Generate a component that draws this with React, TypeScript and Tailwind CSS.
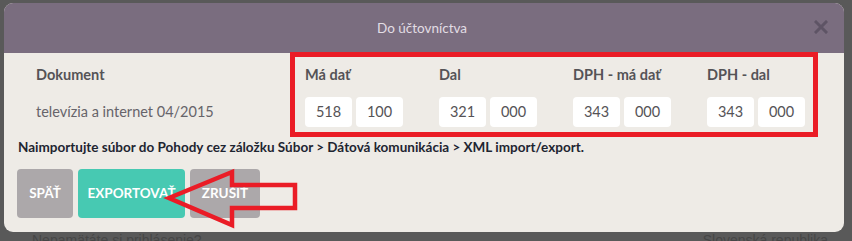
import React from "react";

const groups = [
  { label: "Má dať", a: "518", b: "100" },
  { label: "Dal", a: "321", b: "000" },
  { label: "DPH - má dať", a: "343", b: "000" },
  { label: "DPH - dal", a: "343", b: "000" },
];

export default function App() {
  return (
    <div
      className="relative w-[852px] h-[241px] overflow-hidden bg-[#595959] flex flex-col"
      style={{ fontFamily: "Lato, 'Open Sans', sans-serif" }}
    >
      <div className="pt-[3px] pl-[4px]">
        <div className="w-[840px] h-[229px] rounded-[9px] bg-[#eeebe6] overflow-hidden flex flex-col">
          {/* header */}
          <div className="h-[50px] bg-[#7a6d7f] flex items-center justify-center relative">
            <span className="text-[13.5px] text-[#e2dde4] ml-[-4px]">Do účtovníctva</span>
            <svg
              className="absolute right-[16px] top-[17px]"
              width="14"
              height="14"
              viewBox="0 0 14 14"
            >
              <path d="M2 2 L12 12 M12 2 L2 12" stroke="#5e5465" strokeWidth="3" strokeLinecap="square" />
            </svg>
          </div>
          {/* table */}
          <div className="pl-[32px] pt-[12px] flex">
            <div className="w-[269px] flex flex-col">
              <div className="h-[20px] text-[14.5px] leading-[20px] font-bold text-[#555356]">Dokument</div>
              <div className="mt-[12px] h-[30px] flex items-center text-[14.5px] text-[#66646a]">
                televízia a internet 04/2015
              </div>
            </div>
            <div className="flex gap-[36px]">
              {groups.map((g) => (
                <div key={g.label} className="flex flex-col w-[98px]">
                  <div className="h-[20px] text-[14.5px] leading-[20px] font-bold text-[#555356] whitespace-nowrap">
                    {g.label}
                  </div>
                  <div className="mt-[12px] flex gap-[4px]">
                    <div className="w-[47px] h-[30px] rounded-[4px] bg-white flex items-center justify-center text-[14.5px] text-[#555356]">
                      {g.a}
                    </div>
                    <div className="w-[47px] h-[30px] rounded-[4px] bg-white flex items-center justify-center text-[14.5px] text-[#555356]">
                      {g.b}
                    </div>
                  </div>
                </div>
              ))}
            </div>
          </div>
          <div className="pl-[14px] mt-[11px] h-[18px] text-[13.5px] leading-[18px] font-bold text-[#1e2531] whitespace-nowrap">
            Naimportujte súbor do Pohody cez záložku Súbor &gt; Dátová komunikácia &gt; XML import/export.
          </div>
          <div className="pl-[13px] mt-[13px] flex gap-[5px]">
            <div className="w-[56px] h-[49px] rounded-[4px] bg-[#aca8aa] flex items-center justify-center text-[13.5px] font-bold text-white">
              SPÄŤ
            </div>
            <div className="w-[107px] h-[49px] rounded-[4px] bg-[#47c9b2] flex items-center justify-center text-[13.5px] font-bold text-white">
              EXPORTOVAŤ
            </div>
            <div className="w-[70px] h-[49px] rounded-[4px] bg-[#aca8aa] flex items-center justify-center text-[13.5px] font-bold text-white">
              ZRUŠIŤ
            </div>
          </div>
        </div>
      </div>
      <div
        className="flex h-[20px] text-[14px] text-[#464646]"
        style={{ fontFamily: "'Liberation Sans', Arial, sans-serif" }}
      >
        <span className="ml-[32px] leading-[16px]">Nepamätáte si prihlásenie?</span>
        <span className="ml-auto mr-[24px] leading-[16px]">Slovenská republika</span>
      </div>
      {/* annotations */}
      <svg className="absolute left-0 top-0 pointer-events-none" width="852" height="241" viewBox="0 0 852 241">
        <rect x="292.5" y="54.5" width="523" height="80" fill="none" stroke="#ea1c26" strokeWidth="5" />
        <path
          d="M295 185 L232 185 L232 172 L169 198 L232 225 L232 208 L295 208 Z"
          fill="none"
          stroke="#ea1c26"
          strokeWidth="4.5"
          strokeLinejoin="miter"
        />
      </svg>
    </div>
  );
}
